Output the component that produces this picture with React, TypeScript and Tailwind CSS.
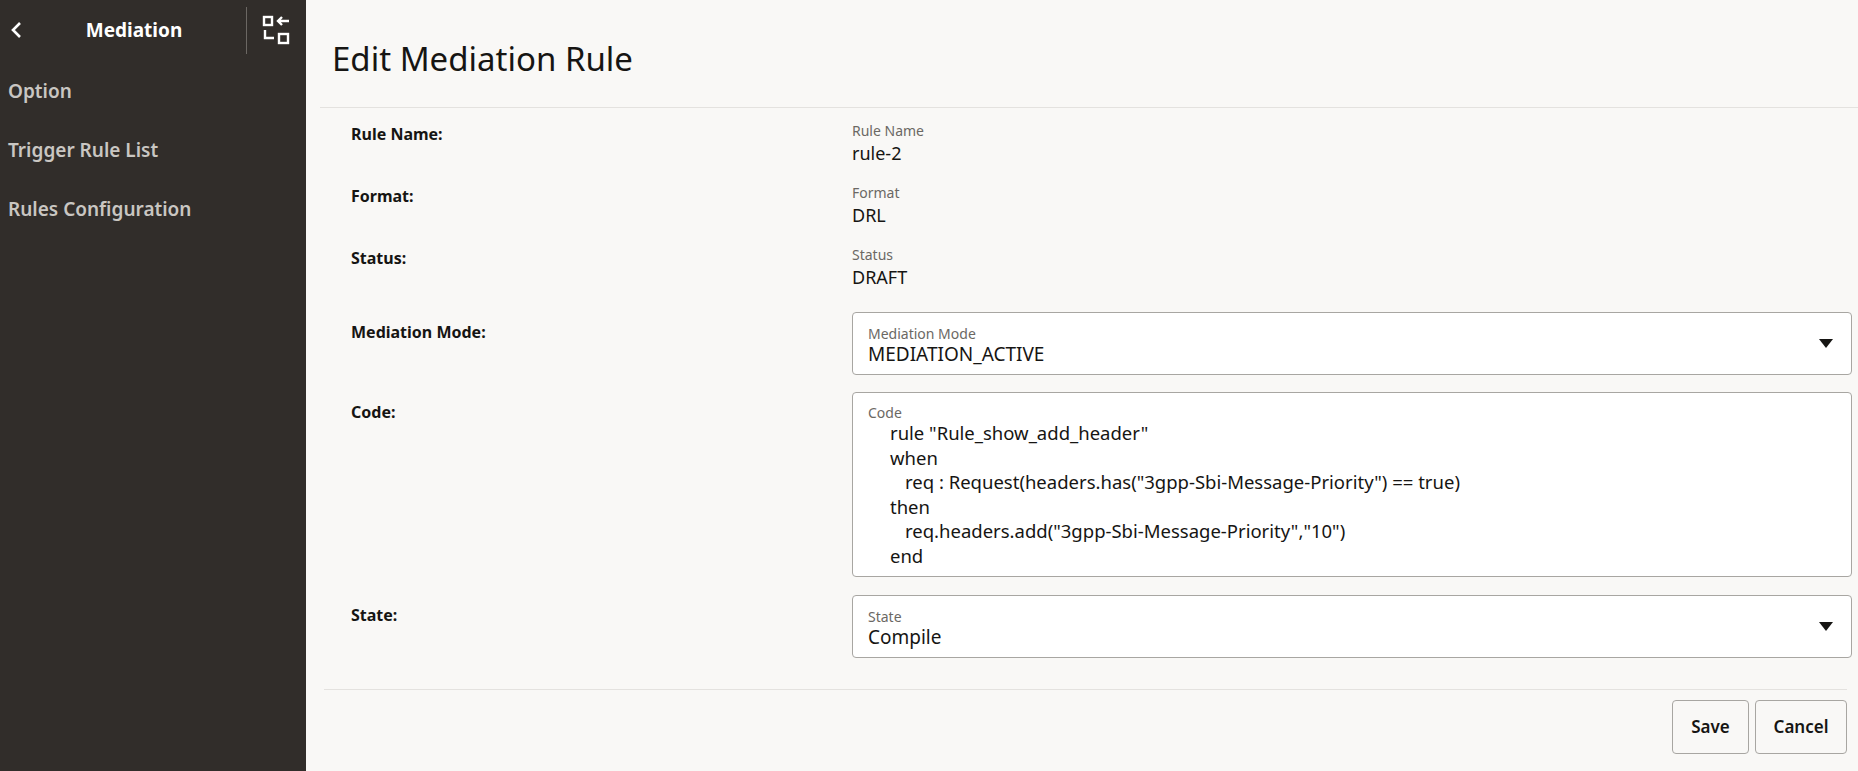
import React from "react";

const Caret = () => (
  <svg width="14" height="9" viewBox="0 0 14 9" className="mr-3"><path d="M0 0h14L7 9z" fill="#161513" /></svg>
);

function Row({ label, top, children, h }: { label: string; top?: string; children: React.ReactNode; h: string }) {
  return (
    <div className={`flex ${h}`}>
      <div className={`w-[546px] shrink-0 pl-[45px] font-bold text-[16px] text-[#161513] ${top ?? "pt-0"}`}>{label}</div>
      <div className="flex-1">{children}</div>
    </div>
  );
}

function ReadOnly({ label, value }: { label: string; value: string }) {
  return (
    <div>
      <div className="text-[14px] leading-[18px] text-[#6b6864]">{label}</div>
      <div className="text-[18px] leading-[26px] text-[#161513]">{value}</div>
    </div>
  );
}

function Select({ label, value }: { label: string; value: string }) {
  return (
    <div className="h-[63px] border border-[#a8a6a2] rounded-[4px] bg-white flex items-center pl-[15px] pr-[6px]">
      <div className="flex-1 pt-[4px]">
        <div className="text-[14px] leading-[17px] text-[#6b6864]">{label}</div>
        <div className="text-[19px] leading-[25px] text-[#161513]">{value}</div>
      </div>
      <Caret />
    </div>
  );
}

export default function App() {
  const code = [
    ["rule \"Rule_show_add_header\"", 1],
    ["when", 1],
    ["req : Request(headers.has(\"3gpp-Sbi-Message-Priority\") == true)", 2],
    ["then", 1],
    ["req.headers.add(\"3gpp-Sbi-Message-Priority\",\"10\")", 2],
    ["end", 1],
  ] as const;
  return (
    <div className="flex w-[1858px] h-[771px] overflow-hidden" style={{ fontFamily: '"Noto Sans", "Open Sans", sans-serif' }}>
      <aside className="w-[306px] shrink-0 bg-[#312d2a] text-[#c9c6c2]">
        <div className="h-[60px] flex items-center relative">
          <svg width="14" height="20" viewBox="0 0 14 20" className="ml-[9px]"><path d="M11 3 4 10l7 7" stroke="#fff" strokeWidth="2.6" fill="none" /></svg>
          <div className="w-[222px] text-center text-white font-bold text-[19px]">Mediation</div>
          <div className="w-px h-[47px] bg-[#6b6763] ml-[1px]" />
          <svg width="30" height="32" viewBox="0 0 30 32" className="ml-[15px]" fill="none" stroke="#fff" strokeWidth="2.4">
            <rect x="2" y="3" width="8" height="8" />
            <path d="M27 7H16M20 3l-4 4 4 4" />
            <path d="M3 16v8h9" />
            <rect x="17" y="20" width="9" height="9" />
          </svg>
        </div>
        <nav className="text-[19px] font-semibold pl-[8px] pt-[2px]">
          <div className="h-[60px] flex items-center -mt-[1px]">Option</div>
          <div className="h-[59px] flex items-center">Trigger Rule List</div>
          <div className="h-[59px] flex items-center">Rules Configuration</div>
        </nav>
      </aside>
      <main className="flex-1 bg-[#f9f8f6] flex flex-col">
        <h1 className="h-[107px] flex items-center pl-[26px] pt-[10px] text-[33px] text-[#161513]">Edit Mediation Rule</h1>
        <div className="ml-[14px] h-px bg-[#e4e2df]" />
        <div className="pr-[6px] flex flex-col pt-[14px]">
          <Row label="Rule Name:" h="h-[62px]"><ReadOnly label="Rule Name" value="rule-2" /></Row>
          <Row label="Format:" h="h-[62px]"><ReadOnly label="Format" value="DRL" /></Row>
          <Row label="Status:" h="h-[66px]"><ReadOnly label="Status" value="DRAFT" /></Row>
          <Row label="Mediation Mode:" top="pt-[8px]" h="h-[80px]"><Select label="Mediation Mode" value="MEDIATION_ACTIVE" /></Row>
          <Row label="Code:" top="pt-[8px]" h="h-[203px]">
            <div className="h-[185px] border border-[#a8a6a2] rounded-[4px] bg-white pl-[15px] pt-[11px]">
              <div className="text-[14px] leading-[17px] text-[#6b6864]">Code</div>
              {code.map(([t, lv], i) => (
                <div key={i} className={`text-[18.5px] leading-[24.5px] text-[#161513] whitespace-pre ${lv === 2 ? "pl-[37px]" : "pl-[22px]"}`}>{t}</div>
              ))}
            </div>
          </Row>
          <Row label="State:" top="pt-[8px]" h="h-[78px]"><Select label="State" value="Compile" /></Row>
        </div>
        <div className="ml-[18px] mr-[11px] h-px bg-[#e4e2df] mt-[16px]" />
        <div className="flex justify-end gap-[6px] pr-[11px] pt-[10px]">
          <button className="w-[77px] h-[54px] border border-[#a8a6a2] rounded-[4px] bg-[#f9f8f6] text-[17px] font-semibold text-[#161513]">Save</button>
          <button className="w-[92px] h-[54px] border border-[#a8a6a2] rounded-[4px] bg-[#f9f8f6] text-[17px] font-semibold text-[#161513]">Cancel</button>
        </div>
      </main>
    </div>
  );
}
